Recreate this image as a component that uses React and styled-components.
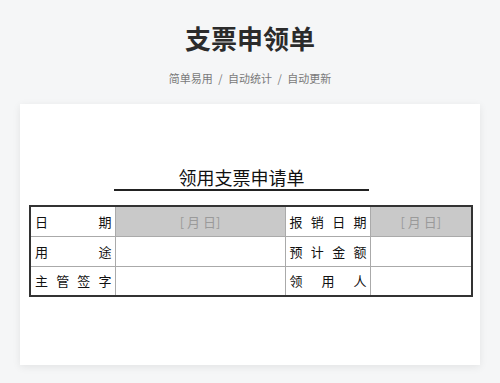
import React from 'react';
import styled, { createGlobalStyle } from 'styled-components';

const GlobalStyle = createGlobalStyle`
  body {
    margin: 0;
    background: #f5f6f7;
    font-family: "Noto Sans CJK SC", "Noto Sans", sans-serif;
  }
`;

const Page = styled.div`
  width: 500px;
  height: 383px;
  display: flex;
  flex-direction: column;
  align-items: center;
  padding-top: 20px;
  box-sizing: border-box;
`;

const Title = styled.h1`
  margin: 0;
  font-size: 26px;
  line-height: 36px;
  font-weight: 700;
  color: #2b2b2b;
`;

const Subtitle = styled.p`
  margin: 13px 0 17px;
  font-size: 11px;
  line-height: 18px;
  color: #7a7a7a;
  word-spacing: 3px;
`;

const Sheet = styled.section`
  width: 460px;
  background: #fff;
  box-shadow: 0 2px 8px rgba(0, 0, 0, 0.08);
  padding: 62px 9px 68px;
  box-sizing: border-box;
  display: flex;
  flex-direction: column;
`;

const FormTitle = styled.div`
  width: 255px;
  margin: 0 0 14px 85px;
  text-align: center;
  font-size: 18px;
  line-height: 23px;
  color: #111;
  border-bottom: 2px solid #222;
`;

const Table = styled.table`
  width: 442px;
  border-collapse: collapse;
  border: 2px solid #333;
  table-layout: fixed;
  font-size: 13px;
  color: #111;
`;

const Row = styled.tr`
  height: 30px;
`;

const Label = styled.td`
  border: 1px solid #aaa;
  padding: 0 3px 0 4px;
  text-align: justify;
  text-align-last: justify;
  white-space: nowrap;
`;

const Value = styled.td`
  border: 1px solid #aaa;
  text-align: center;
  color: #9a9a9a;
  background: ${(p) => (p.$filled ? '#c9c9c9' : '#fff')};
`;

const rows = [
  ['日　期', '[ 月 日]', '报销日期', '[ 月 日]'],
  ['用　途', '', '预计金额', ''],
  ['主管签字', '', '领　用　人', ''],
];

export default function App() {
  return (
    <>
      <GlobalStyle />
      <Page>
        <Title>支票申领单</Title>
        <Subtitle>简单易用 / 自动统计 / 自动更新</Subtitle>
        <Sheet>
          <FormTitle>领用支票申请单</FormTitle>
          <Table>
            <colgroup>
              <col style={{ width: 85 }} />
              <col style={{ width: 170 }} />
              <col style={{ width: 85 }} />
              <col style={{ width: 102 }} />
            </colgroup>
            <tbody>
              {rows.map(([a, b, c, d], i) => (
                <Row key={i}>
                  <Label>{a}</Label>
                  <Value $filled={!!b}>{b}</Value>
                  <Label>{c}</Label>
                  <Value $filled={!!d}>{d}</Value>
                </Row>
              ))}
            </tbody>
          </Table>
        </Sheet>
      </Page>
    </>
  );
}
